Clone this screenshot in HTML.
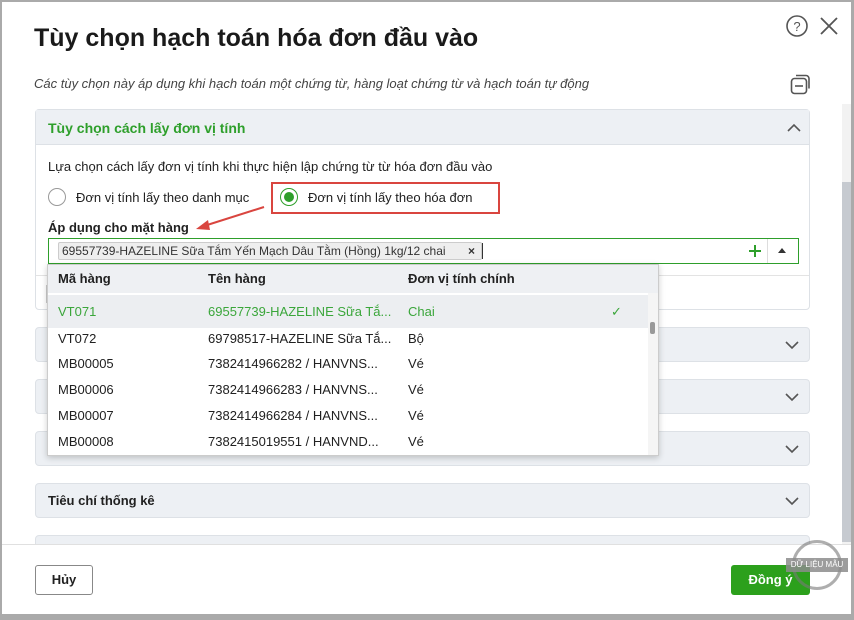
<!DOCTYPE html>
<html><head><meta charset="utf-8"><style>
*{box-sizing:border-box;margin:0;padding:0}
body{width:854px;height:620px;overflow:hidden;font-family:"Liberation Sans",sans-serif;color:#212121;background:#aaa;position:relative}
.dlg{position:absolute;left:2px;top:2px;width:849px;height:612px;background:#fff}
.abs{position:absolute}
.sec{position:absolute;left:35px;width:775px;height:35px;background:#edf0f4;border:1px solid #dde1e6;border-radius:4px}
.sec .chev{position:absolute;right:10px;top:12px}
.t13{font-size:13px}
.row{position:absolute;left:0;width:600px;height:26px;font-size:13px;line-height:26px}
.row span{position:absolute}
</style></head><body>
<div class="dlg">
 <div class="abs" style="left:32px;top:22px;font-size:25px;font-weight:bold;color:#1a1a1a">Tùy chọn hạch toán hóa đơn đầu vào</div>
 <svg class="abs" style="left:783px;top:12px" width="24" height="24" viewBox="0 0 24 24"><circle cx="12" cy="12" r="10" fill="none" stroke="#555" stroke-width="1.6"/><text x="12" y="17" font-size="13" text-anchor="middle" fill="#555" font-family="Liberation Sans">?</text></svg>
 <svg class="abs" style="left:816px;top:13px" width="22" height="22"><path d="M3 3L19 19M19 3L3 19" stroke="#555" stroke-width="1.8"/></svg>
 <div class="abs" style="left:32px;top:74px;font-size:13px;font-style:italic;color:#444">Các tùy chọn này áp dụng khi hạch toán một chứng từ, hàng loạt chứng từ và hạch toán tự động</div>
 <svg class="abs" style="left:788px;top:70px" width="22" height="24"><rect x="1.5" y="6.5" width="15" height="15" rx="3" fill="none" stroke="#555" stroke-width="1.6"/><path d="M6 3.5h10a3 3 0 0 1 3 3v10" fill="none" stroke="#555" stroke-width="1.6"/><path d="M5 14h8" stroke="#555" stroke-width="1.6"/></svg>
 <div class="abs" style="left:33px;top:107px;width:775px;height:201px;border:1px solid #dde1e6;border-radius:4px;background:#fff">
  <div style="height:35px;background:#edf0f4;border-bottom:1px solid #dde1e6;padding:10px 0 0 12px;font-size:14px;color:#2e9f2b;font-weight:bold">Tùy chọn cách lấy đơn vị tính</div>
  <svg class="abs" style="right:8px;top:13px" width="14" height="10"><path d="M1 8L7 2L13 8" fill="none" stroke="#555" stroke-width="1.6"/></svg>
  <div class="abs t13" style="left:12px;top:49px">Lựa chọn cách lấy đơn vị tính khi thực hiện lập chứng từ từ hóa đơn đầu vào</div>
  <div class="abs" style="left:12px;top:78px;width:18px;height:18px;border:1px solid #999;border-radius:50%"></div>
  <div class="abs t13" style="left:40px;top:80px">Đơn vị tính lấy theo danh mục</div>
  <div class="abs" style="left:235px;top:72px;width:229px;height:32px;border:2px solid #d9453f"></div>
  <div class="abs" style="left:244px;top:78px;width:18px;height:18px;border:1px solid #2e9f2b;border-radius:50%"><div style="margin:3px;width:10px;height:10px;border-radius:50%;background:#2e9f2b"></div></div>
  <div class="abs t13" style="left:272px;top:80px">Đơn vị tính lấy theo hóa đơn</div>
  <div class="abs t13" style="left:12px;top:110px;font-weight:bold">Áp dụng cho mặt hàng</div>
  <div class="abs" style="left:12px;top:128px;width:751px;height:26px;border:1px solid #2e9f2b;background:#fff">
   <div class="abs" style="left:9px;top:3px;width:424px;height:18px;background:#eee;border:1px solid #ccc;border-radius:2px;font-size:12px;line-height:16px;padding-left:3px;color:#333">69557739-HAZELINE Sữa Tắm Yến Mạch Dâu Tằm (Hồng) 1kg/12 chai <span style="position:absolute;right:6px;font-weight:bold">×</span></div>
   <div class="abs" style="left:433px;top:4px;width:1px;height:16px;background:#333"></div>
   <svg class="abs" style="left:699px;top:5px" width="14" height="14"><path d="M7 1V13M1 7H13" stroke="#2e9f2b" stroke-width="2"/></svg>
   <div class="abs" style="left:718px;top:0;width:1px;height:24px;background:#ddd"></div>
   <svg class="abs" style="left:729px;top:9px" width="8" height="6"><path d="M0 5L4 0L8 5Z" fill="#333"/></svg>
  </div>
  <div class="abs" style="left:0;top:165px;width:773px;height:1px;background:#e3e3e3"></div>
  <div class="abs" style="left:10px;top:175px;width:6px;height:18px;border:1px solid #ccc"></div>
 </div>
 <div class="sec" style="top:325px;left:33px"><svg class="chev" width="14" height="10"><path d="M1 2L7 8L13 2" fill="none" stroke="#555" stroke-width="1.6"/></svg></div>
 <div class="sec" style="top:377px;left:33px"><svg class="chev" width="14" height="10"><path d="M1 2L7 8L13 2" fill="none" stroke="#555" stroke-width="1.6"/></svg></div>
 <div class="sec" style="top:429px;left:33px"><svg class="chev" width="14" height="10"><path d="M1 2L7 8L13 2" fill="none" stroke="#555" stroke-width="1.6"/></svg></div>
 <div class="sec" style="top:481px;left:33px"><div style="padding:9px 12px;font-size:13px;font-weight:bold">Tiêu chí thống kê</div><svg class="chev" width="14" height="10"><path d="M1 2L7 8L13 2" fill="none" stroke="#555" stroke-width="1.6"/></svg></div>
 <div class="sec" style="top:533px;left:33px"></div>
 <div class="abs" style="left:840px;top:102px;width:9px;height:440px;background:#f2f2f2"></div>
 <div class="abs" style="left:840px;top:180px;width:9px;height:360px;background:#c6cad0"></div>
 <div class="abs" style="left:45px;top:262px;width:612px;height:192px;background:#fff;border:1px solid #ccc;box-shadow:0 2px 6px rgba(0,0,0,.2);overflow:hidden">
  <div class="row" style="top:0;width:610px;height:28px;line-height:28px;background:#eef0f3;font-weight:bold"><span style="left:10px">Mã hàng</span><span style="left:160px">Tên hàng</span><span style="left:360px">Đơn vị tính chính</span></div>
  <div class="row" style="top:30px;width:600px;height:33px;line-height:33px;background:#eceef1;color:#3aa63a"><span style="left:10px">VT071</span><span style="left:160px">69557739-HAZELINE Sữa Tắ...</span><span style="left:360px">Chai</span><span style="left:563px">✓</span></div>
  <div class="row" style="top:60px;line-height:28px"><span style="left:10px">VT072</span><span style="left:160px">69798517-HAZELINE Sữa Tắ...</span><span style="left:360px">Bộ</span></div>
  <div class="row" style="top:86px"><span style="left:10px">MB00005</span><span style="left:160px">7382414966282 / HANVNS...</span><span style="left:360px">Vé</span></div>
  <div class="row" style="top:112px"><span style="left:10px">MB00006</span><span style="left:160px">7382414966283 / HANVNS...</span><span style="left:360px">Vé</span></div>
  <div class="row" style="top:138px"><span style="left:10px">MB00007</span><span style="left:160px">7382414966284 / HANVNS...</span><span style="left:360px">Vé</span></div>
  <div class="row" style="top:164px"><span style="left:10px">MB00008</span><span style="left:160px">7382415019551 / HANVND...</span><span style="left:360px">Vé</span></div>
  <div class="abs" style="left:600px;top:28px;width:10px;height:163px;background:#f5f5f5"></div>
  <div class="abs" style="left:602px;top:57px;width:5px;height:12px;background:#999;border-radius:2px"></div>
 </div>
 <svg class="abs" style="left:190px;top:200px" width="80" height="32"><path d="M72 5L12 24" stroke="#d9453f" stroke-width="2"/><path d="M4 27L16 18L18 28Z" fill="#d9453f"/></svg>
 <div class="abs" style="left:0;top:542px;width:849px;height:70px;background:#fff;border-top:1px solid #e0e0e0"></div>
 <div class="abs" style="left:33px;top:563px;width:58px;height:30px;border:1px solid #888;border-radius:3px;text-align:center;line-height:28px;font-size:13px;font-weight:bold">Hủy</div>
 <div class="abs" style="left:729px;top:563px;width:79px;height:30px;background:#2ca01c;border-radius:3px;color:#fff;text-align:center;line-height:30px;font-size:13px;font-weight:bold">Đồng ý</div>
 <div class="abs" style="left:790px;top:538px;width:50px;height:50px;border:3px solid rgba(120,120,120,.6);border-radius:50%"></div>
 <div class="abs" style="left:784px;top:556px;width:62px;height:14px;background:rgba(140,140,140,.85);color:#fff;font-size:8px;text-align:center;line-height:14px">DỮ LIỆU MẪU</div>
</div>
</body></html>
